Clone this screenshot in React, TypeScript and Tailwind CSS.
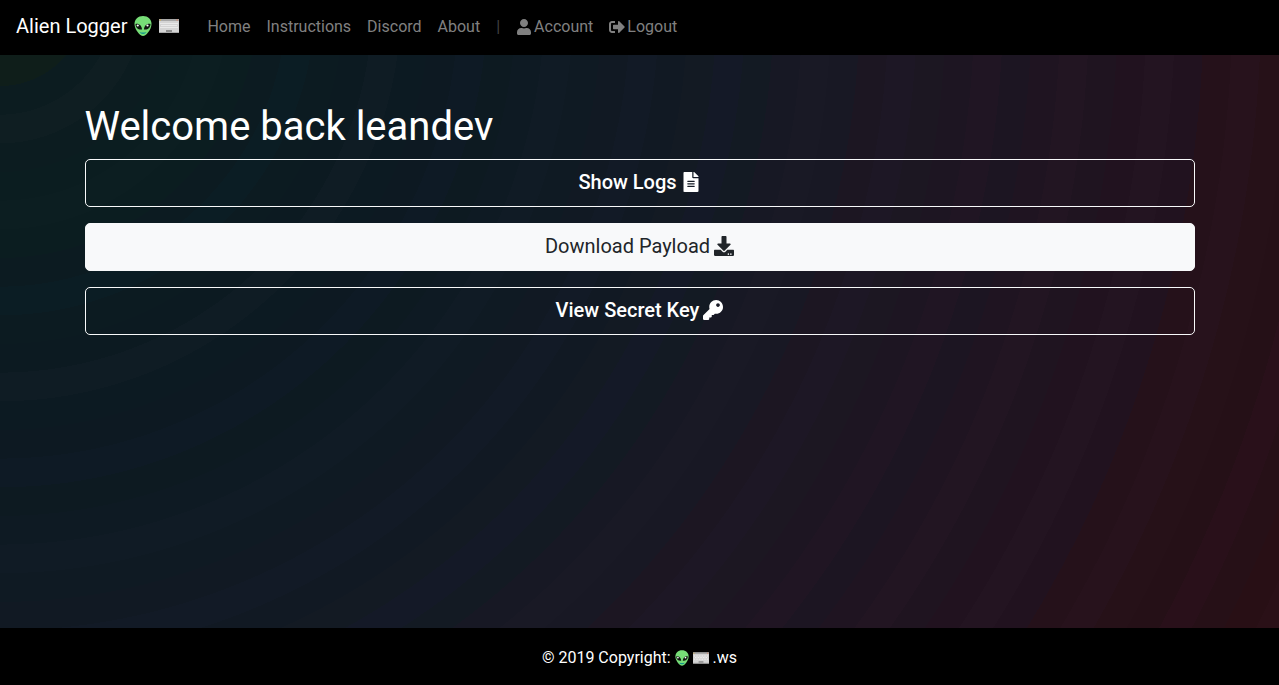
import { FaUser, FaSignOutAlt, FaFileAlt, FaDownload, FaKey } from "react-icons/fa";

const ringWidth = 2;

const ringColors = [
  "#0f1e1a", "#0f1e1a", "#0f1e1a", "#0c1c20", "#0f1e22", "#0c1c20", "#0b1d20", "#0c1e21", "#0b1d20", "#0c1b21",
  "#0b1d24", "#0c1b21", "#0c1a21", "#0f1c24", "#0c1a22", "#0d1922", "#0e1a25", "#0d1a21", "#0e1a23", "#101b25",
  "#0f1a23", "#111923", "#121a26", "#111923", "#131a23", "#141927", "#131a23", "#171824", "#191925", "#181824",
  "#1c1622", "#1d1725", "#1c1722", "#1d1522", "#201523", "#1c1522", "#1f1421", "#221522", "#1f1420", "#21121f",
  "#231421", "#21121f", "#25111a", "#27121c", "#261118", "#251017", "#29101a", "#261017", "#280f15", "#2a1017",
];

const rings = `radial-gradient(1433px circle at 0 0, ${ringColors
  .map((color, i) => `${color} ${i * ringWidth}% ${(i + 1) * ringWidth}%`)
  .join(", ")})`;

function Alien({ className }: { className: string }) {
  return (
    <svg viewBox="0 0 36 40" className={className} aria-hidden="true">
      <path d="M18 0C8 0 1 7 1 16c0 11 11 24 17 24s17-13 17-24C35 7 28 0 18 0Z" fill="#77dd77" />
      <path d="M3 16c6-2 13 3 13 11-8 1-13-4-13-11ZM33 16c-6-2-13 3-13 11 8 1 13-4 13-11Z" fill="#101510" />
      <circle cx="7.5" cy="19" r="2.2" fill="#fff" />
      <circle cx="27" cy="19" r="2.2" fill="#fff" />
      <path d="M11 32q7 2 14 0-2 4-7 4t-7-4Z" fill="#12988c" />
    </svg>
  );
}

function Keyboard({ className }: { className: string }) {
  return (
    <svg viewBox="0 0 40 28" className={className} aria-hidden="true">
      <rect width="40" height="28" rx="1" fill="#d4d4d4" />
      <rect width="40" height="4" fill="#a8a8a8" />
      <rect x="1" y="1" width="3" height="2" fill="#e0b040" />
      <rect x="35" y="1" width="3" height="2" fill="#e08060" />
      <path d="M3 9h34M5 13h30M3 17h34" stroke="#fff" strokeWidth="2" strokeDasharray="2 2" />
      <rect x="14" y="22" width="12" height="4" fill="#8c8c8c" />
      <path d="M0 27h40" stroke="#aaa" strokeWidth="2" />
    </svg>
  );
}

const navLink = "flex items-center gap-0.5 text-[#808080] hover:text-[#bfbfbf]";
const action = "flex h-12 w-full items-center justify-center gap-1 rounded-[5px] border border-[#f8f9fa] pb-0.5 text-xl";

export default function App() {
  return (
    <div
      className="flex min-h-screen flex-col font-['Roboto',sans-serif] text-white"
      style={{ backgroundImage: rings }}
    >
      <nav className="flex h-[55px] items-center bg-black px-4 pb-1">
        <a href="#" className="flex items-center gap-[7px] text-xl">
          Alien Logger
          <Alien className="h-5 w-[18px]" />
          <Keyboard className="h-[14px] w-5" />
        </a>
        <div className="ml-7 flex items-center gap-4 pt-0.5 text-base">
          <a href="#" className={navLink}>Home</a>
          <a href="#" className={navLink}>Instructions</a>
          <a href="#" className={navLink}>Discord</a>
          <a href="#" className={navLink}>About</a>
          <span className="text-[#404040]">|</span>
          <a href="#" className={navLink}><FaUser />Account</a>
          <a href="#" className={navLink}><FaSignOutAlt />Logout</a>
        </div>
      </nav>
      <main className="mx-auto w-full max-w-[1140px] flex-1 px-[15px] pt-12">
        <h1 className="mb-2 text-[40px] leading-12">Welcome back leandev</h1>
        <div className="flex flex-col gap-4">
          <button className={`${action} font-medium`}>Show Logs <FaFileAlt /></button>
          <button className={`${action} bg-[#f8f9fa] text-[#212529]`}>Download Payload <FaDownload /></button>
          <button className={`${action} font-medium`}>View Secret Key <FaKey /></button>
        </div>
      </main>
      <footer className="flex h-[57px] items-center justify-center gap-1 bg-black pt-0.5 text-base">
        © 2019 Copyright:
        <Alien className="h-4 w-[14px]" />
        <Keyboard className="h-3 w-4" />
        .ws
      </footer>
    </div>
  );
}
